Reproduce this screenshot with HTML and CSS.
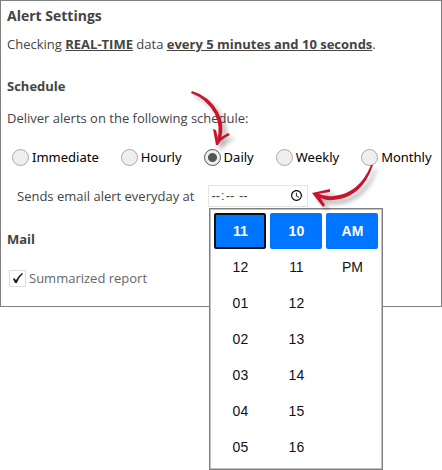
FILE: index.html
```html
<!DOCTYPE html>
<html lang="en">

<head>
    <meta charset="UTF-8">
    <meta name="viewport" content="width=device-width, initial-scale=1.0">
    <title>Alert Settings</title>
    <link rel="stylesheet" href="styles.css">
</head>

<body>
    <main class="panel">
        <h1 class="title">Alert Settings</h1>
        <p class="text">Checking <b>REAL-TIME</b> data <b>every 5 minutes and 10 seconds</b>.</p>

        <h2 class="heading">Schedule</h2>
        <p class="text">Deliver alerts on the following schedule:</p>

        <div class="schedule">
            <label class="option"><input type="radio" name="schedule">Immediate</label>
            <label class="option"><input type="radio" name="schedule">Hourly</label>
            <label class="option">
                <input type="radio" name="schedule" checked>Daily
                <svg class="arrow arrow-daily" width="48" height="70" viewBox="0 0 48 70">
                    <path d="M7 6 Q24 11 33 27 Q40 40 36 54 L32 56 Q36 41 30 29 Q22 14 6 8Z" />
                    <path d="M28 44 L31 45 L33 54 L43 48 L45 50 Q36 54 33 60 L31 60Z" />
                </svg>
            </label>
            <label class="option"><input type="radio" name="schedule">Weekly</label>
            <label class="option"><input type="radio" name="schedule">Monthly</label>
        </div>

        <div class="send">
            <label for="time">Sends email alert everyday at</label>
            <div class="time-box">
                <input type="time" id="time" class="time">
                <svg class="arrow arrow-time" width="76" height="54" viewBox="0 0 76 54">
                    <path d="M66 10 Q54 39 28 41 Q20 42 12 38 L11 41 Q20 46 28 45 Q57 43 68 10Z" />
                    <path d="M7 38 L25 34 L25 37 L13 39 L20 50 L18 52Z" />
                </svg>
                <div class="picker">
                    <div class="column">
                        <button type="button" class="cell active focus">11</button>
                        <button type="button" class="cell">12</button>
                        <button type="button" class="cell">01</button>
                        <button type="button" class="cell">02</button>
                        <button type="button" class="cell">03</button>
                        <button type="button" class="cell">04</button>
                        <button type="button" class="cell">05</button>
                    </div>
                    <div class="column">
                        <button type="button" class="cell active">10</button>
                        <button type="button" class="cell">11</button>
                        <button type="button" class="cell">12</button>
                        <button type="button" class="cell">13</button>
                        <button type="button" class="cell">14</button>
                        <button type="button" class="cell">15</button>
                        <button type="button" class="cell">16</button>
                    </div>
                    <div class="column">
                        <button type="button" class="cell active">AM</button>
                        <button type="button" class="cell">PM</button>
                    </div>
                </div>
            </div>
        </div>

        <h2 class="heading">Mail</h2>
        <label class="report">
            <span class="check">
                <input type="checkbox" checked>
                <svg width="11" height="11" viewBox="0 0 11 11">
                    <path d="M1 6 L2 5 L4 7 Q6 3 10 0 L11 1 Q7 4 5 10 L3 10Z" />
                </svg>
            </span>
            Summarized report
        </label>
    </main>
</body>

</html>
```

FILE: styles.css
```css
:root {
    --text: #444;
    --line: #808080;
    --blue: #0075ff;
    --red: #c8142d;
}

* {
    margin: 0;
    padding: 0;
    box-sizing: border-box;
}

body {
    min-height: 100vh;
    background-color: #fff;
    color: var(--text);
    font: 13px/20px "Open Sans", sans-serif;
}

.panel {
    padding: 5px 6px 18px;
    border: 1px solid var(--line);
}

.title {
    font-size: 14px;
    line-height: 20px;
    font-weight: 700;
}

.text {
    margin-top: 8px;
}

.text b {
    font-weight: 700;
    text-decoration: underline;
}

.heading {
    margin-top: 22px;
    font-size: 13px;
    line-height: 20px;
    font-weight: 700;
}

.heading + .text {
    margin-top: 12px;
}

/* schedule options */
.schedule {
    display: flex;
    gap: 22px;
    margin-top: 19px;
    padding-left: 5px;
    color: #000;
    font-family: "Noto Sans", sans-serif;
}

.option {
    position: relative;
    display: flex;
    align-items: center;
    gap: 3px;
}

.option input {
    appearance: none;
    width: 17px;
    height: 17px;
    border: 1px solid #aaa;
    border-radius: 50%;
    background-color: #eee;
}

.option input:checked {
    border-color: #555;
    background: radial-gradient(circle, #555 4px, #eee 5px);
}

/* time field */
.send {
    display: flex;
    align-items: center;
    gap: 14px;
    margin-top: 18px;
    padding-left: 10px;
}

.time-box {
    position: relative;
}

.time {
    display: block;
    width: 100px;
    height: 22px;
    padding: 0 1px;
    border: 1px solid #e5e5e5;
    background-color: #fff;
    color: #444;
    font: 13px "Liberation Sans", Arial, sans-serif;
}

.picker {
    position: absolute;
    top: 23px;
    left: 1px;
    display: grid;
    grid-template-columns: repeat(3, 52px);
    gap: 4px;
    padding: 4px;
    border: 1px solid var(--line);
    outline: 1px solid #c0c0c0;
    outline-offset: -2px;
    background-color: #fff;
}

.column {
    display: flex;
    flex-direction: column;
}

.cell {
    height: 36px;
    border: none;
    border-radius: 2px;
    background-color: transparent;
    color: #111;
    font: 14px "Liberation Sans", Arial, sans-serif;
}

.cell.active {
    background-color: var(--blue);
    color: #fff;
    font-weight: 700;
}

.cell.focus {
    border: 2px solid #101010;
}

/* mail */
.report {
    display: flex;
    align-items: center;
    gap: 3px;
    margin-top: 19px;
    padding-left: 2px;
    color: #666;
}

.check {
    display: grid;
    place-items: center;
}

.check input,
.check svg {
    grid-area: 1 / 1;
}

.check input {
    appearance: none;
    width: 17px;
    height: 17px;
    border: 1px solid #ddd;
    background-color: #fff;
}

.check svg {
    z-index: 1;
    fill: #222;
    pointer-events: none;
}

.check input:not(:checked) + svg {
    display: none;
}

/* red pointers over the form */
.arrow {
    position: absolute;
    z-index: 1;
    overflow: visible;
    fill: var(--red);
    filter: drop-shadow(4px 4px 2px rgba(0, 0, 0, .3));
    pointer-events: none;
}

.arrow-daily {
    left: -19px;
    bottom: 12px;
}

.arrow-time {
    left: 97px;
    top: -30px;
}
```
